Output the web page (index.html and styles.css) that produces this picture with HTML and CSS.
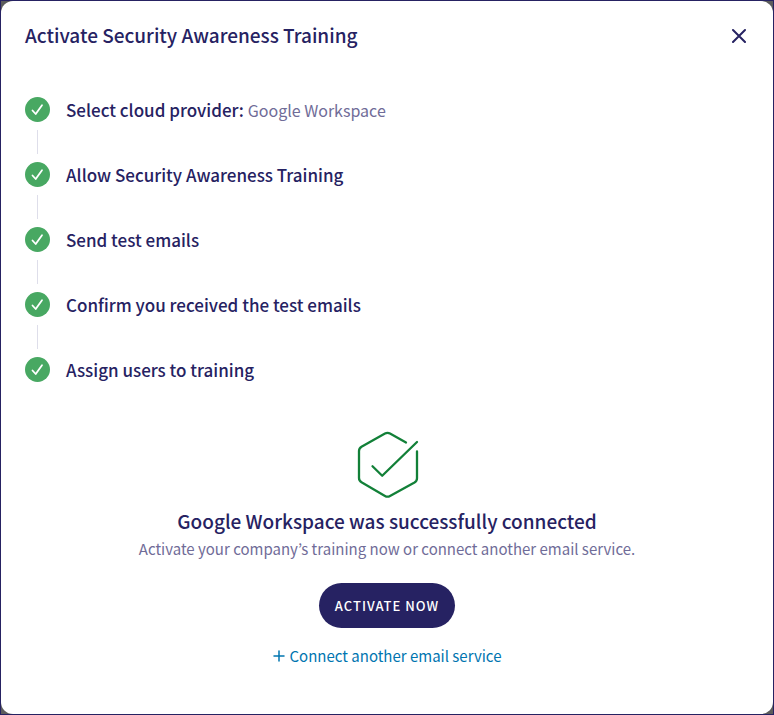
FILE: index.html
```html
<!DOCTYPE html>
<html lang="en">
  <head>
    <meta charset="UTF-8" />
    <meta name="viewport" content="width=device-width, initial-scale=1.0" />
    <title>Activate Security Awareness Training</title>
    <link rel="stylesheet" href="styles.css">
  </head>
  <body>
    <svg class="symbols" aria-hidden="true">
      <symbol id="check" viewBox="0 0 25 25">
        <circle cx="12.5" cy="12.5" r="12.5" fill="#48a862" />
        <path d="M7.5 13.5l3.2 3.500 6.300-8.700" fill="none" stroke="#fff" stroke-width="1.8" stroke-linecap="round" stroke-linejoin="round" />
      </symbol>
    </svg>

    <main class="dialog" role="dialog" aria-labelledby="dialogTitle">
      <header class="dialog-header">
        <h1 id="dialogTitle">Activate Security Awareness Training</h1>
        <button type="button" class="close-button" aria-label="Close">
          <svg width="16" height="16" viewBox="0 0 16 16">
            <path d="M2 3l12 12M14 3L2 15" />
          </svg>
        </button>
      </header>

      <ol class="steps">
        <li class="step">
          <svg class="step-icon"><use href="#check" /></svg>
          <span>Select cloud provider: <span class="step-value">Google Workspace</span></span>
        </li>
        <li class="step">
          <svg class="step-icon"><use href="#check" /></svg>
          <span>Allow Security Awareness Training</span>
        </li>
        <li class="step">
          <svg class="step-icon"><use href="#check" /></svg>
          <span>Send test emails</span>
        </li>
        <li class="step">
          <svg class="step-icon"><use href="#check" /></svg>
          <span>Confirm you received the test emails</span>
        </li>
        <li class="step">
          <svg class="step-icon"><use href="#check" /></svg>
          <span>Assign users to training</span>
        </li>
      </ol>

      <section class="result">
        <svg class="result-icon" width="64" height="69" viewBox="0 0 64 69">
          <path d="M51 12.500L35 3.500q-2.500-1.400-5 0L6.500 16.700Q4 18.200 4 21v27q0 2.800 2.500 4.200L30 66q2.500 1.400 5 0l24.500-13.500Q62 51 62 48.200V21.500" />
          <path d="M17.500 36.300L27.200 45.800 62 12" />
        </svg>
        <h2>Google Workspace was successfully connected</h2>
        <p>Activate your company’s training now or connect another email service.</p>
        <button type="button" class="activate-button">ACTIVATE NOW</button>
        <a href="#" class="connect-link">
          <svg width="12" height="12" viewBox="0 0 12 12">
            <path d="M6 1v10M1 6h10" />
          </svg>
          Connect another email service
        </a>
      </section>
    </main>
  </body>
</html>
```

FILE: styles.css
```css
* {
  box-sizing: border-box;
}

body {
  margin: 0;
  min-height: 100vh;
  display: flex;
  border: 1px solid #262262;
  background-color: #5c5c5c;
  font-family: "Noto Sans CJK KR", "Open Sans", sans-serif;
  color: #262262;
}

.symbols {
  position: absolute;
  width: 0;
  height: 0;
}

.dialog {
  flex: 1;
  padding: 20px 24px 44px;
  background-color: white;
  border-radius: 12px;
}

.dialog-header {
  display: flex;
  justify-content: space-between;
  align-items: center;
}

h1,
h2 {
  margin: 0;
  font-size: 19px;
  line-height: 28px;
  font-weight: 500;
}

.close-button {
  display: flex;
  padding: 2px;
  border: none;
  background: none;
  cursor: pointer;
}

.close-button path,
.connect-link path {
  fill: none;
  stroke: #262262;
  stroke-width: 2;
  stroke-linecap: round;
}

.steps {
  display: flex;
  flex-direction: column;
  gap: 40px;
  margin: 48px 0 0;
  padding: 0;
  list-style: none;
}

.step {
  position: relative;
  display: flex;
  align-items: center;
  gap: 16px;
  font-size: 17px;
  line-height: 24px;
  font-weight: 500;
}

/* line between two steps */
.step:not(:last-child)::after {
  content: "";
  position: absolute;
  top: 33px;
  left: 12px;
  width: 1px;
  height: 24px;
  background-color: #dedeea;
}

.step-icon {
  width: 25px;
  height: 25px;
}

.step-value {
  font-size: 16px;
  line-height: 1;
  font-weight: 400;
  color: #706c98;
}

.result {
  display: flex;
  flex-direction: column;
  align-items: center;
  margin-top: 48px;
  text-align: center;
}

.result-icon {
  margin-bottom: 8px;
}

.result-icon path {
  fill: none;
  stroke: #128038;
  stroke-width: 2.3;
  stroke-linecap: round;
  stroke-linejoin: round;
}

.result p {
  margin: 0;
  font-size: 15px;
  line-height: 28px;
  color: #706c98;
}

.activate-button {
  height: 45px;
  margin: 20px 0 16px;
  padding: 0 16px;
  border: none;
  border-radius: 23px;
  background-color: #262262;
  color: white;
  font-family: inherit;
  font-size: 13px;
  font-weight: 500;
  letter-spacing: 1px;
  cursor: pointer;
}

.connect-link {
  display: flex;
  align-items: center;
  gap: 5px;
  font-size: 15px;
  line-height: 24px;
  color: #0075b0;
  text-decoration: none;
}

.connect-link path {
  stroke: #0075b0;
  stroke-width: 1.5;
}
```
